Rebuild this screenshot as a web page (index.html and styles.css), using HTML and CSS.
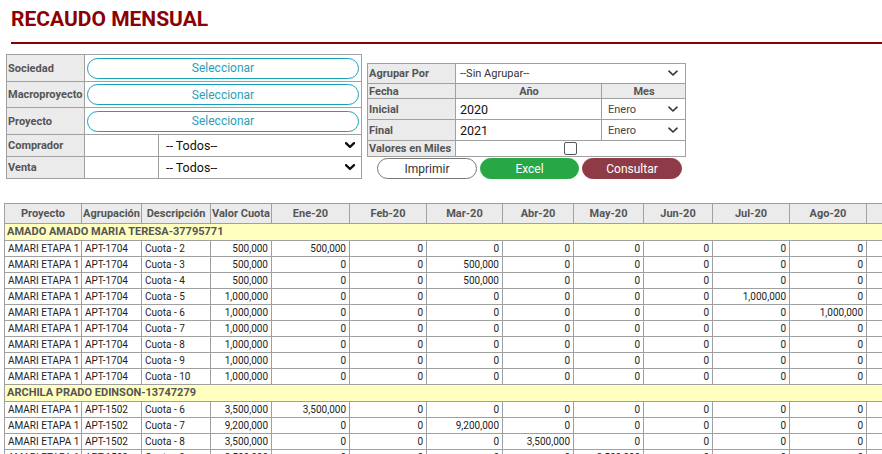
FILE: index.html
```html
<!DOCTYPE html>
<html lang="es">
<head>
<meta charset="utf-8">
<title>Recaudo Mensual</title>
<link rel="stylesheet" href="styles.css">
</head>
<body>
<header class="page-head">
  <h1 class="page-title">RECAUDO MENSUAL</h1>
</header>

<section class="filters">
  <table class="ftable left">
    <colgroup><col class="c-lbl"><col class="c-mid"><col class="c-sel"></colgroup>
    <tr class="r-pill"><th>Sociedad</th><td colspan="2" class="pill-cell"><button class="pill">Seleccionar</button></td></tr>
    <tr class="r-pill2"><th>Macroproyecto</th><td colspan="2" class="pill-cell"><button class="pill">Seleccionar</button></td></tr>
    <tr class="r-pill"><th>Proyecto</th><td colspan="2" class="pill-cell"><button class="pill">Seleccionar</button></td></tr>
    <tr class="r-sel"><th>Comprador</th><td></td><td><div class="select big"><span>-- Todos--</span><svg class="chev" width="10" height="7" viewBox="0 0 10 7"><polyline points="1,1.2 5,5 9,1.2"/></svg></div></td></tr>
    <tr class="r-sel"><th>Venta</th><td></td><td><div class="select big"><span>-- Todos--</span><svg class="chev" width="10" height="7" viewBox="0 0 10 7"><polyline points="1,1.2 5,5 9,1.2"/></svg></div></td></tr>
  </table>

  <div class="right">
    <table class="ftable rt">
      <colgroup><col class="r-lbl"><col class="r-year"><col class="r-mes"></colgroup>
      <tr class="h20"><th>Agrupar Por</th><td colspan="2"><div class="select small"><span>--Sin Agrupar--</span><svg class="chev thin" width="10" height="7" viewBox="0 0 10 7"><polyline points="1,1.2 5,5 9,1.2"/></svg></div></td></tr>
      <tr class="h15"><th>Fecha</th><th class="center">Año</th><th class="center">Mes</th></tr>
      <tr class="h21"><th>Inicial</th><td class="year">2020</td><td><div class="select mes"><span>Enero</span><svg class="chev thin" width="10" height="7" viewBox="0 0 10 7"><polyline points="1,1.2 5,5 9,1.2"/></svg></div></td></tr>
      <tr class="h21"><th>Final</th><td class="year">2021</td><td><div class="select mes"><span>Enero</span><svg class="chev thin" width="10" height="7" viewBox="0 0 10 7"><polyline points="1,1.2 5,5 9,1.2"/></svg></div></td></tr>
      <tr class="h17"><th>Valores en Miles</th><td colspan="2" class="checkcell"><span class="check"></span></td></tr>
    </table>
    <div class="actions">
      <button class="btn outline">Imprimir</button>
      <button class="btn green">Excel</button>
      <button class="btn wine">Consultar</button>
    </div>
  </div>
</section>

<div class="grid-wrap">
<table class="grid">
  <colgroup>
    <col class="w77"><col class="w60"><col class="w69"><col class="w61">
    <col class="w78"><col class="w77"><col class="w76"><col class="w71"><col class="w70"><col class="w69"><col class="w77"><col class="w77">
    <col class="w77"><col class="w77"><col class="w77"><col class="w77">
  </colgroup>
  <thead>
    <tr><th>Proyecto</th><th>Agrupación</th><th>Descripción</th><th>Valor Cuota</th><th>Ene-20</th><th>Feb-20</th><th>Mar-20</th><th>Abr-20</th><th>May-20</th><th>Jun-20</th><th>Jul-20</th><th>Ago-20</th><th>Sep-20</th><th>Oct-20</th><th>Nov-20</th><th>Dic-20</th></tr>
  </thead>
  <tbody>
    <tr class="group"><td colspan="16">AMADO AMADO MARIA TERESA-37795771</td></tr>
    <tr><td>AMARI ETAPA 1</td><td>APT-1704</td><td>Cuota - 2</td><td class="n">500,000</td><td class="n">500,000</td><td class="n">0</td><td class="n">0</td><td class="n">0</td><td class="n">0</td><td class="n">0</td><td class="n">0</td><td class="n">0</td><td class="n">0</td><td class="n">0</td><td class="n">0</td><td class="n">0</td></tr>
    <tr><td>AMARI ETAPA 1</td><td>APT-1704</td><td>Cuota - 3</td><td class="n">500,000</td><td class="n">0</td><td class="n">0</td><td class="n">500,000</td><td class="n">0</td><td class="n">0</td><td class="n">0</td><td class="n">0</td><td class="n">0</td><td class="n">0</td><td class="n">0</td><td class="n">0</td><td class="n">0</td></tr>
    <tr><td>AMARI ETAPA 1</td><td>APT-1704</td><td>Cuota - 4</td><td class="n">500,000</td><td class="n">0</td><td class="n">0</td><td class="n">500,000</td><td class="n">0</td><td class="n">0</td><td class="n">0</td><td class="n">0</td><td class="n">0</td><td class="n">0</td><td class="n">0</td><td class="n">0</td><td class="n">0</td></tr>
    <tr><td>AMARI ETAPA 1</td><td>APT-1704</td><td>Cuota - 5</td><td class="n">1,000,000</td><td class="n">0</td><td class="n">0</td><td class="n">0</td><td class="n">0</td><td class="n">0</td><td class="n">0</td><td class="n">1,000,000</td><td class="n">0</td><td class="n">0</td><td class="n">0</td><td class="n">0</td><td class="n">0</td></tr>
    <tr><td>AMARI ETAPA 1</td><td>APT-1704</td><td>Cuota - 6</td><td class="n">1,000,000</td><td class="n">0</td><td class="n">0</td><td class="n">0</td><td class="n">0</td><td class="n">0</td><td class="n">0</td><td class="n">0</td><td class="n">1,000,000</td><td class="n">0</td><td class="n">0</td><td class="n">0</td><td class="n">0</td></tr>
    <tr><td>AMARI ETAPA 1</td><td>APT-1704</td><td>Cuota - 7</td><td class="n">1,000,000</td><td class="n">0</td><td class="n">0</td><td class="n">0</td><td class="n">0</td><td class="n">0</td><td class="n">0</td><td class="n">0</td><td class="n">0</td><td class="n">0</td><td class="n">0</td><td class="n">0</td><td class="n">0</td></tr>
    <tr><td>AMARI ETAPA 1</td><td>APT-1704</td><td>Cuota - 8</td><td class="n">1,000,000</td><td class="n">0</td><td class="n">0</td><td class="n">0</td><td class="n">0</td><td class="n">0</td><td class="n">0</td><td class="n">0</td><td class="n">0</td><td class="n">0</td><td class="n">0</td><td class="n">0</td><td class="n">0</td></tr>
    <tr><td>AMARI ETAPA 1</td><td>APT-1704</td><td>Cuota - 9</td><td class="n">1,000,000</td><td class="n">0</td><td class="n">0</td><td class="n">0</td><td class="n">0</td><td class="n">0</td><td class="n">0</td><td class="n">0</td><td class="n">0</td><td class="n">0</td><td class="n">0</td><td class="n">0</td><td class="n">0</td></tr>
    <tr><td>AMARI ETAPA 1</td><td>APT-1704</td><td>Cuota - 10</td><td class="n">1,000,000</td><td class="n">0</td><td class="n">0</td><td class="n">0</td><td class="n">0</td><td class="n">0</td><td class="n">0</td><td class="n">0</td><td class="n">0</td><td class="n">0</td><td class="n">0</td><td class="n">0</td><td class="n">0</td></tr>
    <tr class="group"><td colspan="16">ARCHILA PRADO EDINSON-13747279</td></tr>
    <tr><td>AMARI ETAPA 1</td><td>APT-1502</td><td>Cuota - 6</td><td class="n">3,500,000</td><td class="n">3,500,000</td><td class="n">0</td><td class="n">0</td><td class="n">0</td><td class="n">0</td><td class="n">0</td><td class="n">0</td><td class="n">0</td><td class="n">0</td><td class="n">0</td><td class="n">0</td><td class="n">0</td></tr>
    <tr><td>AMARI ETAPA 1</td><td>APT-1502</td><td>Cuota - 7</td><td class="n">9,200,000</td><td class="n">0</td><td class="n">0</td><td class="n">9,200,000</td><td class="n">0</td><td class="n">0</td><td class="n">0</td><td class="n">0</td><td class="n">0</td><td class="n">0</td><td class="n">0</td><td class="n">0</td><td class="n">0</td></tr>
    <tr><td>AMARI ETAPA 1</td><td>APT-1502</td><td>Cuota - 8</td><td class="n">3,500,000</td><td class="n">0</td><td class="n">0</td><td class="n">0</td><td class="n">3,500,000</td><td class="n">0</td><td class="n">0</td><td class="n">0</td><td class="n">0</td><td class="n">0</td><td class="n">0</td><td class="n">0</td><td class="n">0</td></tr>
    <tr><td>AMARI ETAPA 1</td><td>APT-1502</td><td>Cuota - 9</td><td class="n">3,500,000</td><td class="n">0</td><td class="n">0</td><td class="n">0</td><td class="n">0</td><td class="n">3,500,000</td><td class="n">0</td><td class="n">0</td><td class="n">0</td><td class="n">0</td><td class="n">0</td><td class="n">0</td><td class="n">0</td></tr>
  </tbody>
</table>
</div>
</body>
</html>
```

FILE: styles.css
```css
* { box-sizing: border-box; }
html, body { margin: 0; padding: 0; background: #fff; }
body {
  font-family: Roboto, "Liberation Sans", Arial, sans-serif;
  color: #333;
  overflow: hidden;
}

/* ---------- title ---------- */
.page-head { padding: 7px 0 0 11px; }
.page-title {
  margin: 0;
  font-size: 21px;
  line-height: 24px;
  font-weight: 700;
  color: #8b0000;
  padding-bottom: 11px;
  border-bottom: 2px solid #8b0000;
}

/* ---------- filters ---------- */
.filters {
  display: flex;
  align-items: flex-start;
  gap: 5px;
  margin-top: 10px;
  padding-left: 6px;
}
.ftable {
  border-collapse: collapse;
  table-layout: fixed;
  border: 1px solid #a0a0a0;
}
.ftable th, .ftable td {
  border: 1px solid #a0a0a0;
  padding: 0;
  line-height: 13px;
}
.ftable th {
  background: #ebebeb;
  color: #555;
  font-size: 11px;
  font-weight: 700;
  text-align: left;
  padding-left: 1px;
  white-space: nowrap;
  vertical-align: middle;
}
.ftable th.center { text-align: center; }

.left { width: 355px; }
.c-lbl { width: 78px; }
.c-mid { width: 74px; }
.c-sel { width: 203px; }
.r-pill { height: 27px; }
.r-pill2 { height: 26px; }
.r-sel { height: 22px; }
.pill-cell { padding: 0 2px !important; }
.pill {
  display: block;
  width: 100%;
  height: 21px;
  border: 1px solid #17a2b8;
  border-radius: 11px;
  background: #fff;
  color: #2aa0b6;
  font-family: Roboto, sans-serif;
  font-size: 12px;
  padding: 0;
}

.select {
  display: flex;
  align-items: center;
  justify-content: space-between;
  white-space: nowrap;
}
.select.big { padding: 0 6px 0 7px; font-size: 12.5px; color: #111; }
.select.small { padding: 0 7px 0 4px; font-size: 11px; color: #333; }
.select.mes { padding: 0 7px 0 6px; font-size: 11px; color: #444; }
.chev { flex: none; }
.chev polyline { fill: none; stroke: #111; stroke-width: 2.4; stroke-linecap: round; stroke-linejoin: round; }
.chev.thin polyline { stroke: #333; stroke-width: 1.6; }

.right { margin-top: 9px; }
.rt { width: 318px; }
.r-lbl { width: 88px; }
.r-year { width: 146px; }
.r-mes { width: 84px; }
.h20 { height: 20px; }
.h15 { height: 15px; }
.h21 { height: 21px; }
.h17 { height: 16px; }
.year { font-size: 12.5px; color: #111; padding-left: 4px !important; }
.checkcell { line-height: 0 !important; text-align: center; }
.check {
  display: inline-block;
  width: 13px;
  height: 13px;
  border: 1px solid #555;
  border-radius: 2px;
  background: #fff;
}

.actions {
  display: flex;
  gap: 3px;
  padding-left: 10px;
  margin-top: 1px;
}
.btn {
  height: 21px;
  border-radius: 11px;
  font-family: Roboto, sans-serif;
  font-size: 12px;
  padding: 0;
}
.btn.outline { width: 100px; background: #fff; border: 1px solid #777; color: #333; }
.btn.green { width: 99px; background: #28a745; border: 1px solid #28a745; color: #fff; }
.btn.wine { width: 100px; background: #8f3b47; border: 1px solid #8f3b47; color: #fff; }

/* ---------- data grid ---------- */
.grid-wrap {
  margin-top: 24px;
  padding-left: 4px;
  overflow: hidden;
}
.grid {
  border-collapse: collapse;
  table-layout: fixed;
  width: 1170px;
}
.w60 { width: 60px; } .w61 { width: 61px; } .w69 { width: 69px; } .w70 { width: 70px; }
.w71 { width: 71px; } .w76 { width: 76px; } .w77 { width: 77px; } .w78 { width: 78px; }
.grid th, .grid td {
  border: 1px solid #a0a0a0;
  white-space: nowrap;
  overflow: hidden;
}
.grid thead tr { height: 20px; }
.grid th {
  background: #ebebeb;
  color: #555;
  font-size: 11px;
  font-weight: 700;
  text-align: center;
  padding: 0;
}
.grid tbody tr { height: 16px; }
.grid td {
  font-size: 10px;
  color: #222;
  padding: 0 3px;
  line-height: 14px;
}
.grid td.n { text-align: right; padding-right: 3px; }
.grid tr.group { height: 17px; }
.grid tr.group td {
  background: #ffffc0;
  color: #555;
  font-size: 11px;
  font-weight: 700;
  padding-left: 2px;
}
```
